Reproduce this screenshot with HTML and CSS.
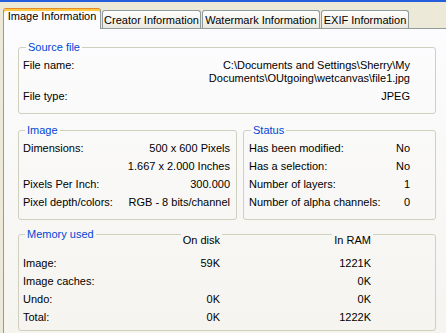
FILE: index.html
```html
<!DOCTYPE html>
<html lang="en">
<head>
    <meta charset="UTF-8">
    <title>Image Information</title>
    <link rel="stylesheet" href="styles.css">
</head>
<body>
    <div class="titlebar"></div>
    <div class="tabs">
        <div class="tab active">Image Information</div>
        <div class="tab creator">Creator Information</div>
        <div class="tab watermark">Watermark Information</div>
        <div class="tab exif">EXIF Information</div>
    </div>
    <div class="panel">
        <fieldset class="group source">
            <legend>Source file</legend>
            <div class="rows">
                <span>File name:</span>
                <span class="val">C:\Documents and Settings\Sherry\My<br>Documents\OUtgoing\wetcanvas\file1.jpg</span>
                <span>File type:</span>
                <span class="val">JPEG</span>
            </div>
        </fieldset>

        <div class="pair">
            <fieldset class="group image">
                <legend>Image</legend>
                <div class="rows fixed">
                    <span>Dimensions:</span><span class="val">500 x 600 Pixels</span>
                    <span></span><span class="val">1.667 x 2.000 Inches</span>
                    <span>Pixels Per Inch:</span><span class="val">300.000</span>
                    <span>Pixel depth/colors:</span><span class="val">RGB - 8 bits/channel</span>
                </div>
            </fieldset>
            <fieldset class="group status">
                <legend>Status</legend>
                <div class="rows fixed">
                    <span>Has been modified:</span><span class="val">No</span>
                    <span>Has a selection:</span><span class="val">No</span>
                    <span>Number of layers:</span><span class="val">1</span>
                    <span>Number of alpha channels:</span><span class="val">0</span>
                </div>
            </fieldset>
        </div>

        <fieldset class="group memory">
            <legend>Memory used</legend>
            <div class="mem-grid">
                <span></span><span class="head">On disk</span><span class="head">In RAM</span>
                <span>Image:</span><span class="val">59K</span><span class="val">1221K</span>
                <span>Image caches:</span><span class="val"></span><span class="val">0K</span>
                <span>Undo:</span><span class="val">0K</span><span class="val">0K</span>
                <span>Total:</span><span class="val">0K</span><span class="val">1222K</span>
            </div>
        </fieldset>
    </div>
</body>
</html>
```

FILE: styles.css
```css
html, body {
margin: 0;
overflow: hidden;
}

body {
width: 446px;
height: 333px;
background: #ece9d8;
color: #000;
font-family: "Liberation Sans", Arial, sans-serif;
font-size: 11px;
line-height: 13px;
}

.titlebar {
height: 2px;
background: #245edb;
}

/* tab strip */
.tabs {
display: flex;
align-items: flex-end;
height: 26px;
padding-left: 3px;
}

.tab {
box-sizing: border-box;
height: 18px;
margin-left: 1px;
padding-top: 3px;
text-align: center;
white-space: nowrap;
border: 1px solid #919b9c;
border-bottom: none;
border-radius: 3px 3px 0 0;
background: linear-gradient(#fefefe, #f3f2ec 60%, #e9e8e1);
}

.tab.active {
position: relative;
z-index: 1;
width: 98px;
height: 21px;
margin-left: 0;
margin-bottom: -1px;
padding-top: 1px;
border-top: 1px solid #e68b2c;
box-shadow: inset 0 2px 0 #ffc83c;
background: #fcfcfe;
}

.creator { width: 99px; }
.watermark { width: 118px; }
.exif { width: 88px; }

.panel {
box-sizing: border-box;
width: 443px;
height: 305px;
margin-left: 3px;
padding: 12px 0 0 14px;
border: 1px solid #919b9c;
border-right: none;
border-bottom: none;
background: linear-gradient(#fcfcfe, #f5f4ef);
}

.group {
box-sizing: border-box;
min-width: 0;
margin: 0;
border: 1px solid #d0d0bf;
border-radius: 3px;
}

.group legend {
margin-left: 2px;
padding: 0 2px;
color: #0046d5;
line-height: 13px;
}

.rows {
display: grid;
grid-template-columns: auto 1fr;
}

.rows.fixed {
grid-auto-rows: 18px;
}

.val {
text-align: right;
justify-self: end;
white-space: nowrap;
}

.source {
width: 418px;
padding: 5px 25px 10px 4px;
}

.source legend {
margin-left: 3px;
}

.source .rows {
row-gap: 5px;
}

.pair {
display: flex;
gap: 6px;
margin-top: 10px;
}

.image {
width: 219px;
padding: 5px 6px 5px 4px;
}

.status {
width: 193px;
padding: 5px 25px 5px 5px;
}

.memory {
width: 418px;
margin-top: 8px;
padding: 0 0 1px 4px;
}

.mem-grid {
display: grid;
grid-template-columns: 153px 44px 151px;
grid-template-rows: 23px repeat(4, 18px);
margin-top: -7px;
}

.mem-grid .head {
justify-self: end;
align-self: start;
height: 13px;
padding: 0 2px;
margin-right: -2px;
background: #f7f6f3;
}
```
